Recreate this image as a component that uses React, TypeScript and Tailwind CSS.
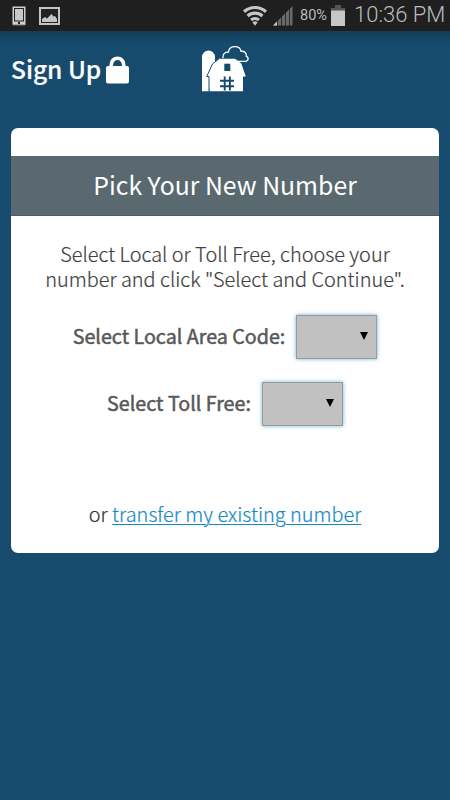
import React from 'react';

interface SelectFieldProps {
  id: string;
  label: string;
}

const StatusBar: React.FC = () => (
  <div className="flex h-[31px] items-center bg-[#1f1f1f] text-[#bcbcbc] font-[Roboto,sans-serif] whitespace-nowrap">
    <svg className="ml-3 h-5 w-[14px] shrink-0" viewBox="0 0 14 20">
      <rect x="0.5" y="0.5" width="13" height="18.5" rx="0.8" fill="#cfcfcf" stroke="#777" />
      <rect x="2.5" y="2.5" width="9" height="12.5" fill="#c8c8c8" stroke="#222" />
      <rect x="6" y="16" width="2" height="2" fill="#222" />
    </svg>
    <svg className="ml-[13px] h-[18px] w-[21px] shrink-0" viewBox="0 0 21 18">
      <rect x="1" y="1" width="19" height="16" fill="#222" stroke="#c4c4c4" strokeWidth="2" />
      <path d="M3 15v-3l3-2 2 1.5L12.5 7l2 2.5L16 9l2 3v3z" fill="#c4c4c4" />
    </svg>
    <svg className="ml-auto h-[21px] w-[24px] shrink-0" viewBox="0 0 24 21" fill="none" stroke="#c6c6c6" strokeWidth="3.2">
      <path d="M1 6.7a16.5 16.5 0 0 1 22 0" />
      <path d="M4.6 11a11 11 0 0 1 14.8 0" />
      <path d="M8.1 15a6 6 0 0 1 7.8 0" />
      <path d="M9.4 17.4a3.8 3.8 0 0 1 5.200 0L12 20.700z" fill="#c6c6c6" stroke="none" />
    </svg>
    <svg className="ml-[6px] h-[21px] w-[20px] shrink-0" viewBox="0 0 20 21">
      <path d="M0 20.5L19.5 1v19.5z" fill="#6a6a6a" />
      <path d="M0 20.5L4 16.5v4z" fill="#c6c6c6" />
      <path d="M4.5 0v21M8.5 0v21M12.5 0v21M16.5 0v21" stroke="#1f1f1f" strokeWidth="0.8" />
    </svg>
    <span className="ml-[7px] w-[28px] text-[14.5px] leading-5">80%</span>
    <svg className="ml-[3px] h-[21px] w-[14px] shrink-0" viewBox="0 0 14 21">
      <path d="M4 0h6v3h4v3H0V3h4z" fill="#555" />
      <rect y="5.5" width="14" height="15.5" fill="#c6c6c6" />
    </svg>
    <span className="mr-[4px] mb-[2px] ml-[9px] w-[92px] text-[22px] font-light leading-[29px]">10:36 PM</span>
  </div>
);

const BarnLogo: React.FC = () => (
  <svg className="h-[48px] w-[50px]" viewBox="0 0 50 48">
    <path d="M2 46.300V12a6.500 6.500 0 0 1 13 0V20L9 46.300z" fill="#fff" />
    <path
      d="M23 13c-.5-3.500 1.500-6 5.500-6 .3-3.500 3-5.300 6.500-5.300S40.500 3.500 41 6.300c3.500-.5 5.800 2 5.300 5 2.500.7 2.500 5-.8 5H36"
      fill="#174b6e"
      stroke="#fff"
      strokeWidth="1.3"
    />
    <path d="M9.500 46.300V31.500H7L12.500 19l6.500-5.300h16L41.300 18.500l4.500 13H43v14.800z" fill="#fff" />
    <path d="M9 46.300V31.500H6.700L12.500 19l6.500-5.300" fill="none" stroke="#174b6e" strokeWidth="1" />
    <path d="M24.300 18.700h6V26h-6z" fill="#174b6e" />
    <path d="M24.700 31.500v14M29.900 31.500v14M20 35.700h14M20 41.300h14" stroke="#174b6e" strokeWidth="1.9" />
  </svg>
);

const Header: React.FC = () => (
  <header className="flex h-[97px] items-start bg-linear-to-b from-[#123d5b] via-[#174b6e] via-15% to-[#174b6e] pl-[11px]">
    <h1 className="mt-[19px] w-[95px] text-[24.5px] font-medium leading-[38px] whitespace-nowrap text-white [-webkit-text-stroke:0.2px_white]">
      Sign Up
    </h1>
    <svg className="mt-[25px] h-[28px] w-[23px]" viewBox="0 0 23 28">
      <rect y="10" width="23" height="17.5" rx="2" fill="#fff" />
      <path d="M5.3 12V8.5a6.2 6.2 0 0 1 12.4 0V12" fill="none" stroke="#fff" strokeWidth="3.6" />
    </svg>
    <div className="mt-[14px] ml-[71px]">
      <BarnLogo />
    </div>
  </header>
);

const SelectField: React.FC<SelectFieldProps> = ({ id, label }) => (
  <div className="flex h-11 items-center justify-center gap-[11px]">
    <label
      htmlFor={id}
      className="-mt-[2px] text-[19.7px] leading-[30px] whitespace-nowrap text-[#585858] [-webkit-text-stroke:0.5px_#585858]"
    >
      {label}
    </label>
    <button
      id={id}
      type="button"
      className="flex h-11 w-[81px] items-center justify-end border border-[#999] bg-[#c1c1c1] pr-[8px] pb-[2px] shadow-[0_0_4px_#64b5dc]"
    >
      <svg className="h-2 w-2" viewBox="0 0 8 8">
        <path d="M0 0h8L4 8z" fill="#000" />
      </svg>
    </button>
  </div>
);

const App: React.FC = () => {
  return (
    <div className="h-[800px] w-[450px] overflow-hidden bg-[#174b6e] font-['Noto_Sans_CJK_SC',sans-serif]">
      <StatusBar />
      <Header />
      <main className="mx-[11px] flex h-[425px] flex-col rounded-[7px] bg-white pt-[28px]">
        <h2 className="h-[60px] border-b border-[#4b5c65] bg-[#5a6970] text-center text-[24.8px] leading-[57px] text-white">
          Pick Your New Number
        </h2>
        <p className="mt-[25px] text-center text-[19.9px] font-light leading-[25px] text-[#404040] [-webkit-text-stroke:0.2px_#404040]">
          Select Local or Toll Free, choose your
          <br />
          number and click "Select and Continue".
        </p>
        <div className="mt-[24px] flex flex-col gap-[23px]">
          <SelectField id="area-code" label="Select Local Area Code:" />
          <SelectField id="toll-free" label="Select Toll Free:" />
        </div>
        <p className="mt-[73px] text-center text-[19.9px] font-light leading-[30px] text-[#333] [-webkit-text-stroke:0.2px_#333]">
          or{' '}
          <a
            href="#transfer"
            className="text-[#1689c5] underline decoration-1 underline-offset-2 [-webkit-text-stroke:0.2px_#1689c5]"
          >
            transfer my existing number
          </a>
        </p>
      </main>
    </div>
  );
};

export default App;
